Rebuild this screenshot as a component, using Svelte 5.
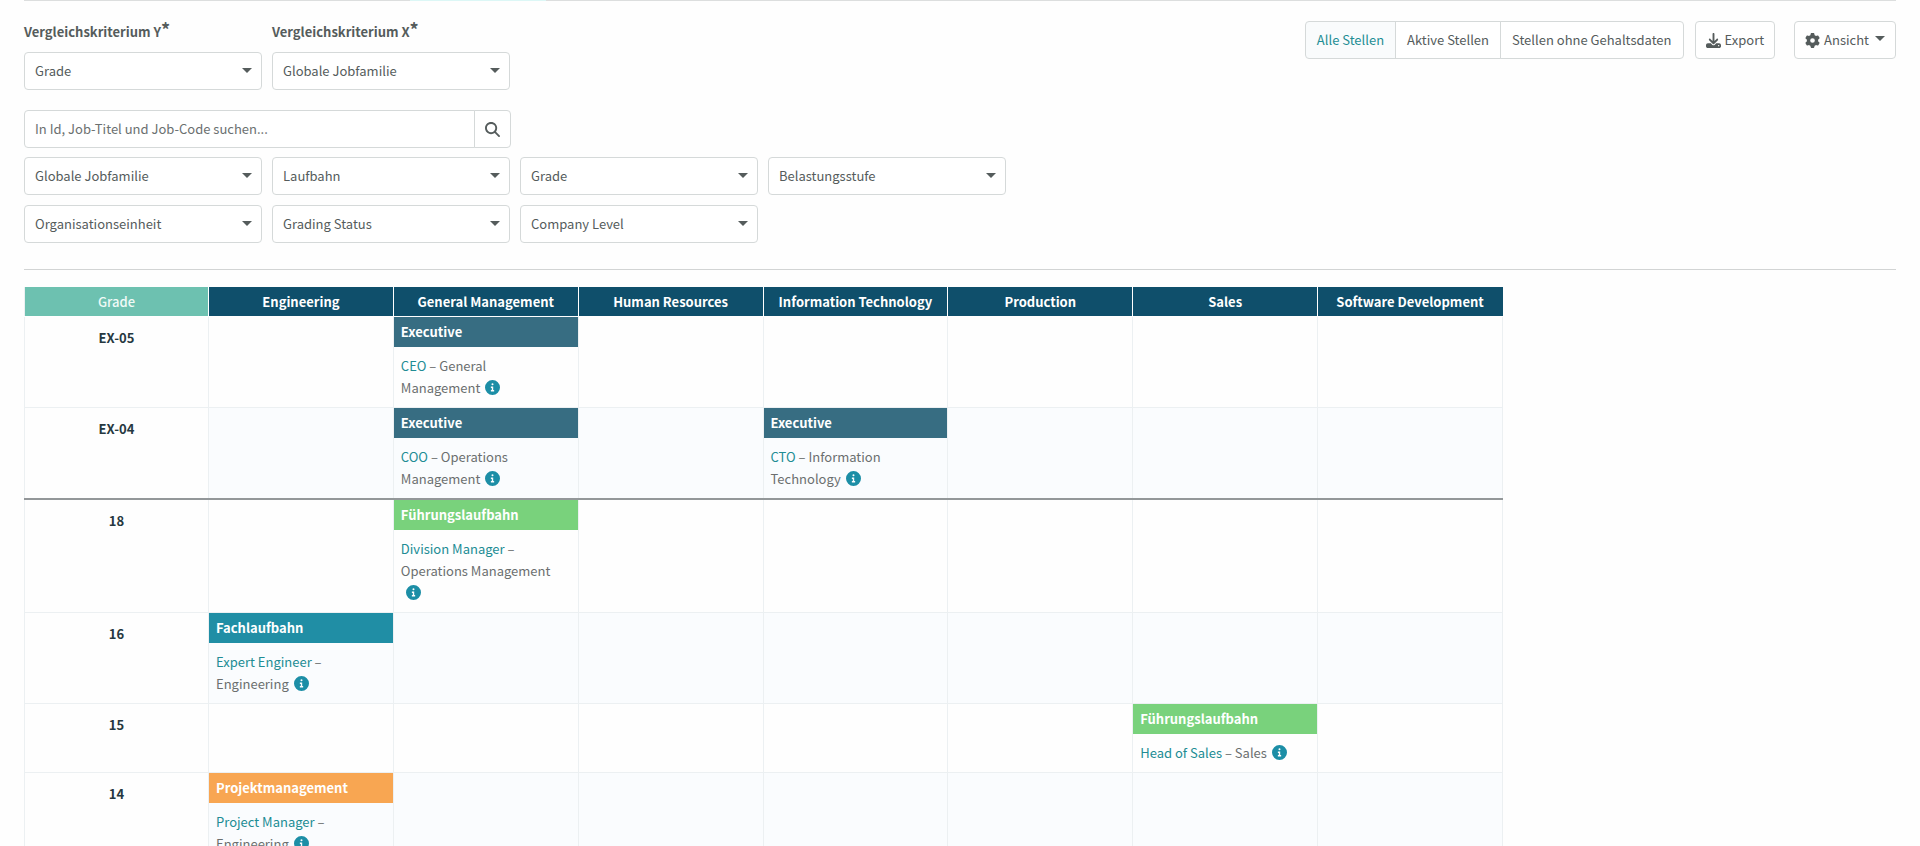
<script lang="ts">
  interface IJob {
    career: string;
    title: string;
    family: string;
  }
  interface IGradeRow {
    grade: string;
    // true when a grade band ends above this row
    bandStart?: boolean;
    jobs: Record<string, IJob>;
  }

  const criteria = [
    { id: "criterion-y", label: "Vergleichskriterium Y", value: "Grade" },
    { id: "criterion-x", label: "Vergleichskriterium X", value: "Globale Jobfamilie" },
  ];
  const filterRows = [
    ["Globale Jobfamilie", "Laufbahn", "Grade", "Belastungsstufe"],
    ["Organisationseinheit", "Grading Status", "Company Level"],
  ];
  const scopes = ["Alle Stellen", "Aktive Stellen", "Stellen ohne Gehaltsdaten"];

  const families = [
    "Engineering",
    "General Management",
    "Human Resources",
    "Information Technology",
    "Production",
    "Sales",
    "Software Development",
  ];

  const careerClass: Record<string, string> = {
    Executive: "executive",
    Führungslaufbahn: "leadership",
    Fachlaufbahn: "expert",
    Projektmanagement: "project",
  };

  const rows: IGradeRow[] = [
    {
      grade: "EX-05",
      jobs: {
        "General Management": { career: "Executive", title: "CEO", family: "General Management" },
      },
    },
    {
      grade: "EX-04",
      jobs: {
        "General Management": { career: "Executive", title: "COO", family: "Operations Management" },
        "Information Technology": { career: "Executive", title: "CTO", family: "Information Technology" },
      },
    },
    {
      grade: "18",
      bandStart: true,
      jobs: {
        "General Management": {
          career: "Führungslaufbahn",
          title: "Division Manager",
          family: "Operations Management",
        },
      },
    },
    {
      grade: "16",
      jobs: {
        Engineering: { career: "Fachlaufbahn", title: "Expert Engineer", family: "Engineering" },
      },
    },
    {
      grade: "15",
      jobs: {
        Sales: { career: "Führungslaufbahn", title: "Head of Sales", family: "Sales" },
      },
    },
    {
      grade: "14",
      jobs: {
        Engineering: { career: "Projektmanagement", title: "Project Manager", family: "Engineering" },
      },
    },
  ];

  let scope = $state("Alle Stellen");
  let query = $state("");
</script>

<div class="page">
  <div class="tabLine"><span class="tabLine_active"></span></div>

  <div class="top">
    <div class="criteria">
      {#each criteria as c (c.id)}
        <div class="field">
          <label for={c.id}>{c.label}<span class="required">*</span></label>
          <div class="selectBox">
            <select id={c.id}><option>{c.value}</option></select>
          </div>
        </div>
      {/each}
    </div>

    <div class="actions">
      <div class="group">
        {#each scopes as s (s)}
          <button class="btn" class:active={scope === s} onclick={() => (scope = s)}>{s}</button>
        {/each}
      </div>
      <button class="btn export">
        <svg class="icon" viewBox="0 0 512 512" aria-hidden="true">
          <path
            d="M288 32c0-17.700-14.300-32-32-32s-32 14.300-32 32v242.700l-73.400-73.400c-12.500-12.500-32.800-12.500-45.300 0s-12.500 32.800 0 45.300l128 128c12.500 12.500 32.800 12.500 45.300 0l128-128c12.500-12.500 12.500-32.800 0-45.300s-32.800-12.500-45.300 0L288 274.700V32zM64 352c-35.300 0-64 28.700-64 64v32c0 35.300 28.700 64 64 64h384c35.300 0 64-28.700 64-64v-32c0-35.300-28.700-64-64-64H346.500l-45.300 45.300c-25 25-65.500 25-90.500 0L165.500 352H64zm368 56a24 24 0 1 1 0 48 24 24 0 1 1 0-48z"
          />
        </svg>
        Export
      </button>
      <button class="btn">
        <svg class="icon" viewBox="0 0 512 512" aria-hidden="true">
          <path
            d="M495.900 166.600c3.200 8.700.5 18.400-6.400 24.600l-43.300 39.400c1.100 8.300 1.700 16.800 1.700 25.400s-.6 17.100-1.700 25.400l43.300 39.400c6.900 6.200 9.600 15.900 6.400 24.600-4.400 11.900-9.700 23.300-15.800 34.300l-4.700 8.100c-6.600 11-14 21.400-22.100 31.200-5.900 7.200-15.700 9.600-24.500 6.800l-55.700-17.700c-13.400 10.300-28.200 18.900-44 25.400l-12.500 57.100c-2 9.100-9 16.300-18.200 17.800-13.800 2.300-28 3.500-42.500 3.500s-28.700-1.200-42.500-3.500c-9.200-1.500-16.200-8.700-18.200-17.800l-12.500-57.100c-15.800-6.500-30.600-15.100-44-25.400l-55.600 17.800c-8.800 2.800-18.600.3-24.500-6.800-8.100-9.800-15.500-20.200-22.100-31.200l-4.700-8.100c-6.100-11-11.400-22.400-15.800-34.300-3.200-8.700-.5-18.400 6.400-24.600l43.300-39.400c-1.100-8.400-1.700-16.900-1.700-25.500s.6-17.100 1.700-25.400l-43.300-39.400c-6.900-6.200-9.600-15.900-6.400-24.600 4.400-11.900 9.700-23.300 15.800-34.300l4.700-8.100c6.600-11 14-21.400 22.100-31.200 5.900-7.200 15.700-9.600 24.500-6.800l55.700 17.700c13.400-10.300 28.200-18.900 44-25.400l12.500-57.100c2-9.100 9-16.300 18.200-17.800C227.300 1.200 241.500 0 256 0s28.700 1.200 42.500 3.500c9.200 1.500 16.200 8.700 18.200 17.800l12.500 57.100c15.800 6.500 30.600 15.100 44 25.400l55.700-17.700c8.800-2.800 18.600-.3 24.500 6.800 8.100 9.800 15.500 20.200 22.100 31.200l4.700 8.100c6.100 11 11.400 22.400 15.800 34.300zM256 336a80 80 0 1 0 0-160 80 80 0 1 0 0 160z"
          />
        </svg>
        Ansicht
        <span class="caret"></span>
      </button>
    </div>
  </div>

  <form class="search" onsubmit={(e) => e.preventDefault()}>
    <input
      type="text"
      aria-label="Suche"
      placeholder="In Id, Job-Titel und Job-Code suchen..."
      bind:value={query}
    />
    <button aria-label="Suchen">
      <svg class="icon" viewBox="0 0 512 512" aria-hidden="true">
        <path
          d="M416 208c0 45.900-14.900 88.300-40 122.700l126.600 126.700c12.500 12.500 12.500 32.800 0 45.300s-32.800 12.500-45.300 0L330.700 376c-34.400 25.200-76.800 40-122.700 40C93.100 416 0 322.900 0 208S93.100 0 208 0s208 93.100 208 208zM208 352a144 144 0 1 0 0-288 144 144 0 1 0 0 288z"
        />
      </svg>
    </button>
  </form>

  <div class="filters">
    {#each filterRows as filters}
      <div class="filterRow">
        {#each filters as filter}
          <div class="selectBox">
            <select aria-label={filter}><option>{filter}</option></select>
          </div>
        {/each}
      </div>
    {/each}
  </div>

  <hr />

  <table>
    <thead>
      <tr>
        <th class="corner" scope="col">Grade</th>
        {#each families as family}
          <th scope="col">{family}</th>
        {/each}
      </tr>
    </thead>
    <tbody>
      {#each rows as row (row.grade)}
        <tr class:bandStart={row.bandStart}>
          <th scope="row">{row.grade}</th>
          {#each families as family}
            {@const job = row.jobs[family]}
            <td>
              {#if job}
                <div class="career {careerClass[job.career]}">{job.career}</div>
                <div class="job">
                  <a href="#job">{job.title}</a> – {job.family}<button
                    class="info"
                    aria-label="Details zu {job.title}"
                    ><svg viewBox="0 0 512 512" aria-hidden="true">
                      <path
                        d="M256 512a256 256 0 1 0 0-512 256 256 0 1 0 0 512zM208 224h72v120h32v48H200v-48h32v-72h-32v-48zm48-112a34 34 0 1 1 0 68 34 34 0 1 1 0-68z"
                      />
                    </svg></button
                  >
                </div>
              {/if}
            </td>
          {/each}
        </tr>
      {/each}
    </tbody>
  </table>
</div>

<style>
  :global(body) {
    background: #fefefe;
    overflow: hidden;
  }

  .page {
    padding: 0 24px;
    color: #555c5c;
    font-family: "Noto Sans CJK SC", "Noto Sans", sans-serif;
    font-size: 13px;
    line-height: 22px;
  }

  button,
  input,
  select {
    font: inherit;
    color: inherit;
  }

  button {
    cursor: pointer;
  }

  .tabLine {
    height: 1px;
    background: #dcdede;
  }
  .tabLine_active {
    display: block;
    width: 136px;
    height: 1px;
    margin-left: 386px;
    background: #dcf7f6;
  }

  .top {
    display: flex;
    justify-content: space-between;
    align-items: flex-start;
    padding-top: 20px;
  }
  .criteria,
  .filterRow {
    display: flex;
    gap: 10px;
  }

  .field label {
    display: block;
    margin-bottom: 9px;
    font-weight: bold;
  }
  .required {
    font-size: 18px;
    line-height: 16px;
  }

  .selectBox {
    position: relative;
    width: 238px;
  }
  .selectBox::after {
    content: "";
    position: absolute;
    top: 16px;
    right: 10px;
    border: 5px solid transparent;
    border-top: 5px solid #555c5c;
    border-bottom: 0;
    pointer-events: none;
  }
  select {
    display: block;
    appearance: none;
    width: 100%;
    height: 38px;
    padding: 0 24px 0 10px;
    border: 1px solid #d5d9d9;
    border-radius: 4px;
    background: #fff;
  }

  .actions {
    display: flex;
  }
  .group {
    display: flex;
    margin-right: 11px;
  }
  .btn {
    display: flex;
    align-items: center;
    gap: 4px;
    height: 38px;
    padding: 0 10px;
    border: 1px solid #d5d9d9;
    border-radius: 4px;
    background: #fff;
    white-space: nowrap;
  }
  .group .btn {
    padding: 0 11px;
    border-radius: 0;
  }
  .group .btn + .btn {
    margin-left: -1px;
  }
  .group .btn:first-child {
    border-radius: 4px 0 0 4px;
  }
  .group .btn:last-child {
    border-radius: 0 4px 4px 0;
  }
  .btn.active {
    background: #f9fbfc;
    color: #1e8e94;
  }
  .export {
    margin-right: 19px;
  }
  .icon {
    width: 15px;
    height: 15px;
    fill: #555c5c;
  }
  .caret {
    margin: 0 0 3px 2px;
    border: 5px solid transparent;
    border-top: 5px solid #555c5c;
    border-bottom: 0;
  }

  .search {
    display: flex;
    width: 487px;
    margin-top: 20px;
  }
  .search input {
    flex: 1;
    min-width: 0;
    height: 38px;
    box-sizing: border-box;
    padding: 0 10px 2px;
    border: 1px solid #d5d9d9;
    border-radius: 4px 0 0 4px;
    background: #fff;
  }
  .search input::placeholder {
    color: #6b7070;
    opacity: 1;
  }
  .search button {
    display: flex;
    align-items: center;
    justify-content: center;
    width: 37px;
    margin-left: -1px;
    padding: 0;
    border: 1px solid #d5d9d9;
    border-radius: 0 4px 4px 0;
    background: #fff;
  }

  .filters {
    display: flex;
    flex-direction: column;
    gap: 10px;
    margin-top: 9px;
  }

  hr {
    height: 1px;
    margin: 26px 0 17px;
    border: 0;
    background: #d2d4d4;
  }

  table {
    table-layout: fixed;
    width: 1479px;
    border-collapse: collapse;
  }
  th,
  td {
    padding: 0;
    border: 1px solid #ecf0f2;
    vertical-align: top;
  }
  thead th {
    height: 29px;
    border-width: 0 1px 1px;
    border-color: #fff;
    background: #0f4f6b;
    color: #fff;
    vertical-align: middle;
  }
  thead th:first-child {
    border-left-color: #ecf0f2;
  }
  thead th:last-child {
    border-right-color: #0f4f6b;
  }
  thead .corner {
    width: 183px;
    background: #6dc1b0;
    color: #f0faf7;
    font-weight: 500;
  }
  tbody th {
    padding-top: 10px;
    color: #263840;
  }
  tbody tr:nth-child(even) td {
    background: #fafcfe;
  }
  .bandStart th,
  .bandStart td {
    border-top: 2px solid #939799;
  }

  .career {
    padding: 4px 7px;
    color: #fff;
    font-weight: bold;
  }
  .executive {
    background: #376d82;
  }
  .leadership {
    background: #79d27c;
  }
  .expert {
    background: #208ea5;
  }
  .project {
    background: #f8a652;
  }

  .job {
    padding: 8px 16px 8px 7px;
    color: #6b6f6f;
  }
  .job a {
    color: #218c94;
    text-decoration: none;
  }
  .info {
    display: inline-block;
    width: 15px;
    height: 15px;
    margin-left: 5px;
    padding: 0;
    border: 0;
    background: none;
    vertical-align: -2px;
  }
  .info svg {
    display: block;
    fill: #1c8ea6;
  }
</style>
